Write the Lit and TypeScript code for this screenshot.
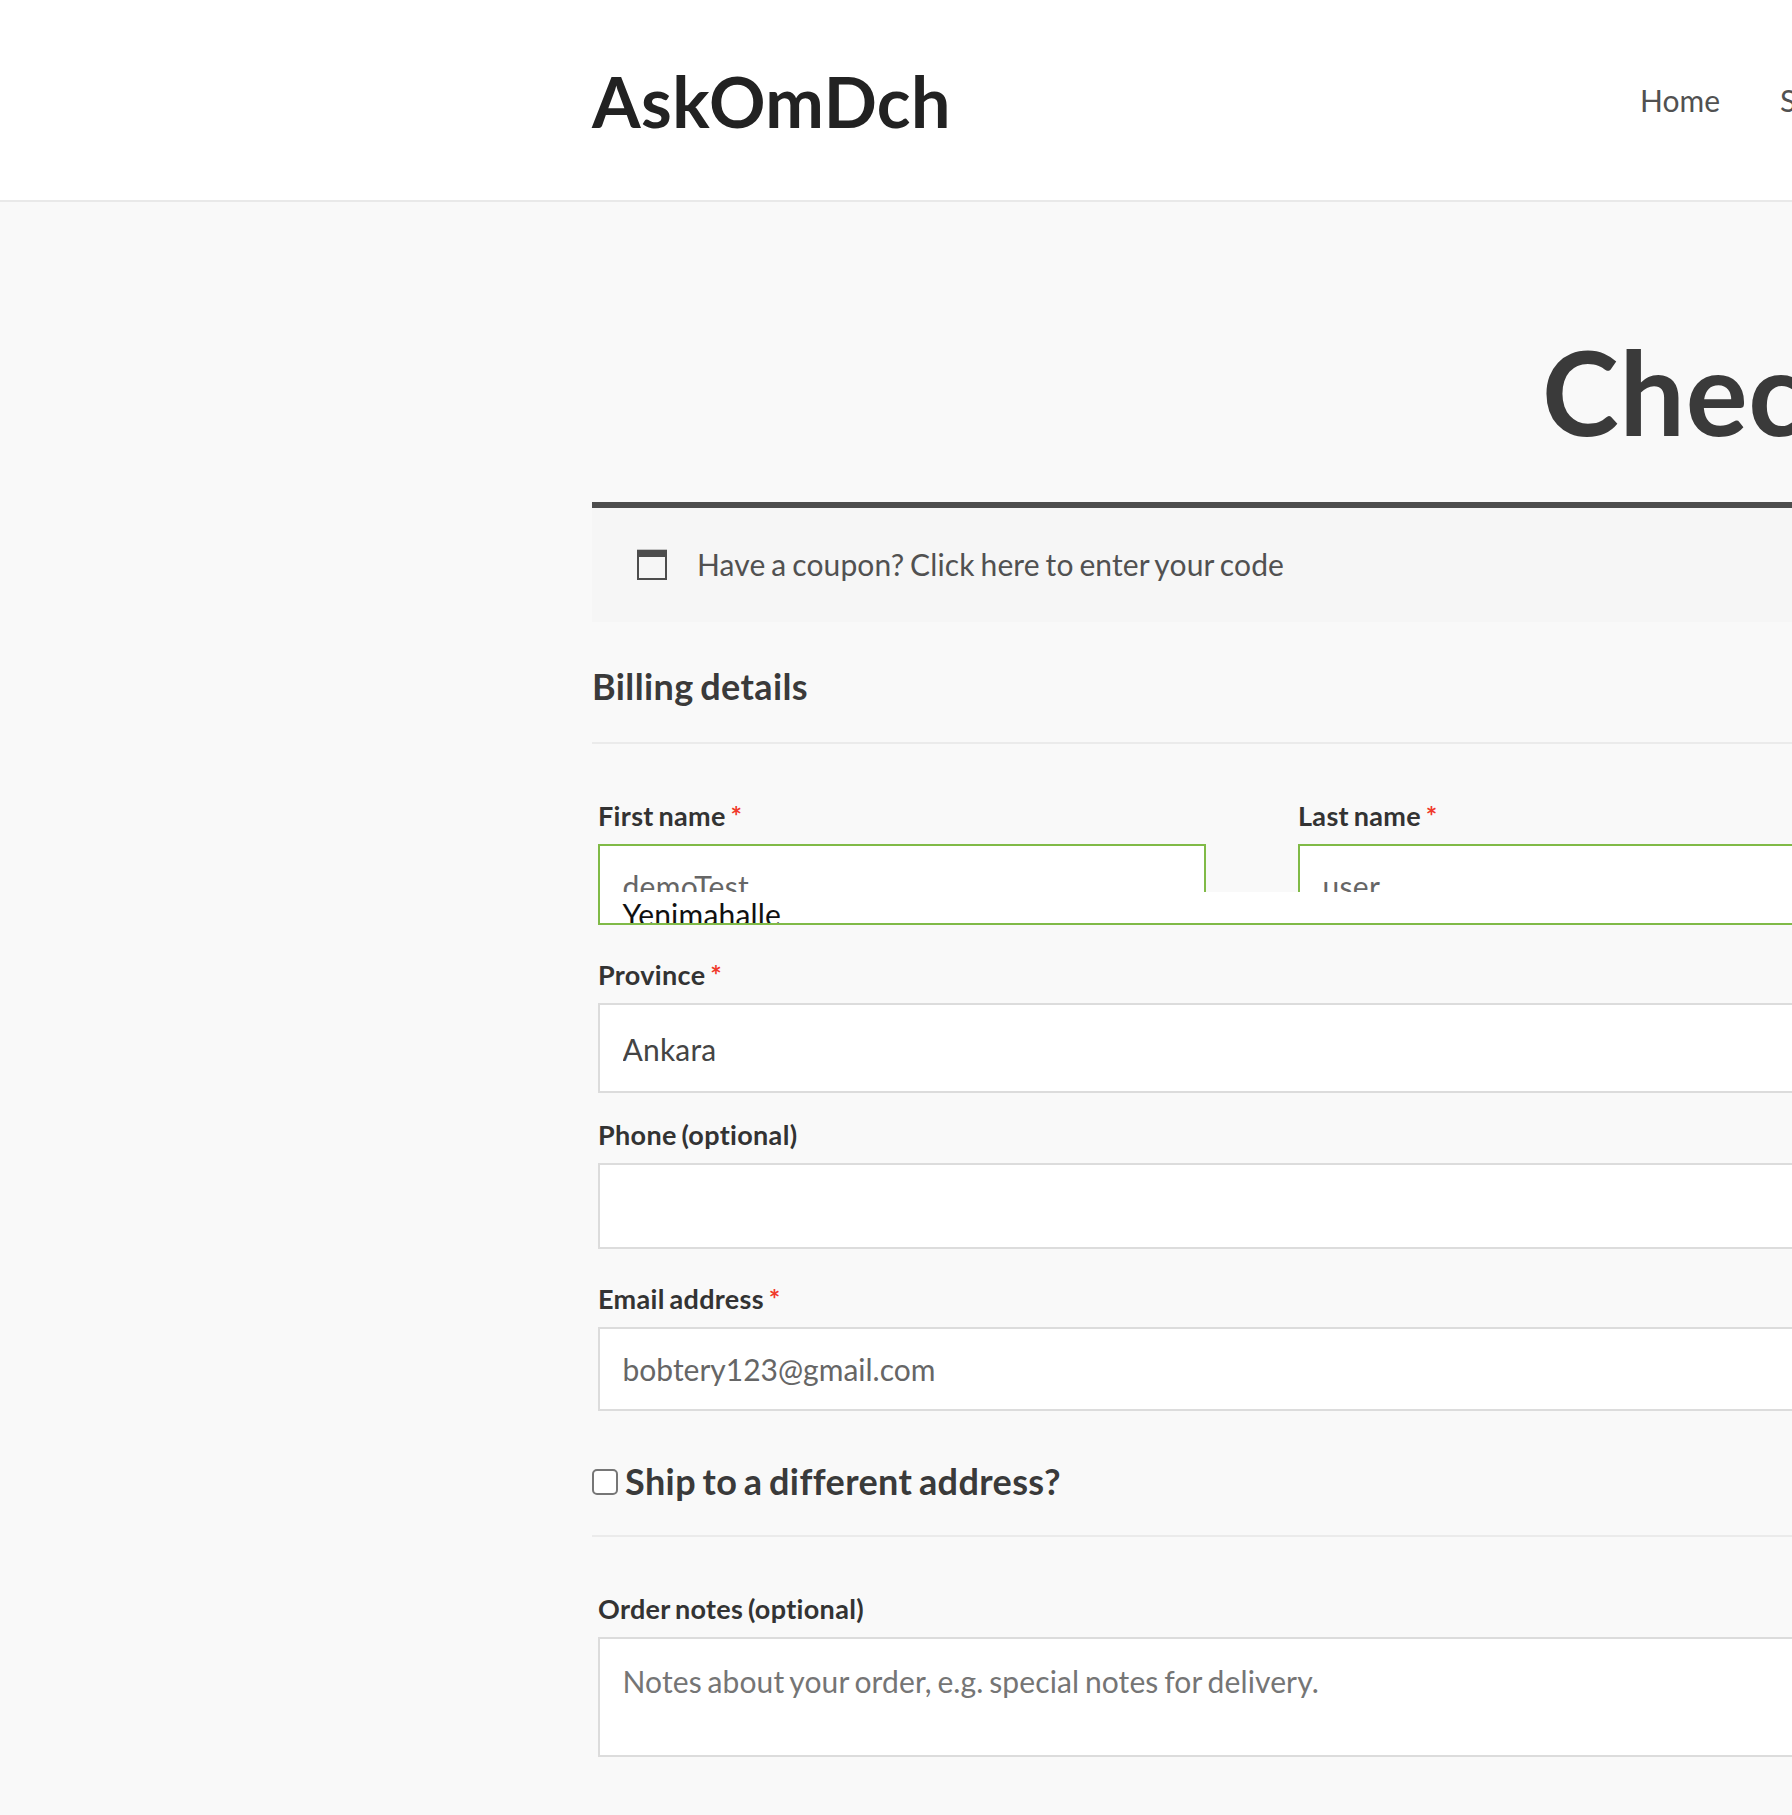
import { LitElement, html, css, nothing } from "lit";
import { customElement } from "lit/decorators.js";

@customElement("app-root")
export class AppRoot extends LitElement {
  static styles = css`
    :host {
      display: block;
      width: 100%;
      height: 1815px;
      overflow: hidden;
      background: #f9f9f9;
      color: #4b4b4b;
      font-family: Lato, sans-serif;
      font-size: 30px;
      line-height: 48px;
      font-variant-ligatures: none;
    }
    * {
      box-sizing: border-box;
    }
    .header {
      height: 202px;
      padding-left: 592px;
      background: #fff;
      border-bottom: 2px solid #e9e9e9;
      display: flex;
      align-items: center;
      white-space: nowrap;
      overflow: hidden;
    }
    .logo {
      width: 1048px;
      flex: none;
      padding-top: 1px;
      font-size: 70px;
      letter-spacing: 0.45px;
      line-height: 86px;
      font-weight: 700;
      color: #222;
    }
    .nav {
      display: flex;
      gap: 60px;
      padding-bottom: 1px;
      color: #515151;
    }
    .content {
      width: 2992px;
      padding: 132px 0 0 592px;
    }
    .title {
      margin: 0;
      height: 168px;
      font-size: 116px;
      line-height: 116px;
      letter-spacing: 0.7px;
      text-align: center;
      font-weight: 700;
      color: #3a3a3a;
    }
    .coupon {
      height: 120px;
      padding: 32px 0 0 44px;
      background: #f6f6f6;
      border-top: 6px solid #4d4d4d;
      color: #515151;
      display: flex;
      gap: 29px;
      letter-spacing: 0.14px;
      word-spacing: -2px;
    }
    .coupon-icon {
      width: 32px;
      height: 32px;
      margin-top: 9px;
    }
    .heading {
      margin: 0;
      font-size: 36px;
      line-height: 48px;
      font-weight: 700;
      letter-spacing: 0.4px;
      word-spacing: -2.6px;
      color: #3a3a3a;
      border-bottom: 2px solid #ebebeb;
    }
    .billing {
      height: 122px;
      padding-top: 40px;
    }
    .shipping {
      height: 126px;
      padding-top: 46px;
      display: flex;
      gap: 7px;
    }
    .check {
      appearance: none;
      width: 26px;
      height: 26px;
      margin: 12px 0 0;
      border: 2px solid #767676;
      border-radius: 5px;
      background: #fff;
    }
    .fields {
      width: 1308px;
      margin-left: 6px;
    }
    .names {
      display: grid;
      grid-template-columns: 608px 608px;
      gap: 92px;
      height: 148px;
      padding-top: 52px;
      overflow: hidden;
    }
    .label {
      display: block;
      height: 48px;
      font-size: 27px;
      line-height: 40px;
      font-weight: 700;
      letter-spacing: 0.33px;
      word-spacing: -2.2px;
      color: #333;
    }
    .required {
      color: #f0392b;
    }
    .control {
      display: block;
      width: 100%;
      margin: 0;
      padding: 0 22.5px;
      border: 2px solid #dcdcdc;
      border-radius: 0;
      outline: none;
      resize: none;
      background: #fff;
      color: #666;
      font: 400 30px/48px Lato, sans-serif;
      font-variant-ligatures: none;
    }
    .control::placeholder {
      color: #757575;
      opacity: 1;
    }
    .valid {
      height: 84px;
      border-color: #80ba47;
      letter-spacing: 0.28px;
    }
    .city {
      height: 33px;
      padding: 0 22.5px;
      overflow: hidden;
      background: #fff;
      border: solid #80ba47;
      border-width: 0 0 2px 2px;
      color: #111;
      line-height: 44px;
      letter-spacing: 0.2px;
    }
    .province {
      height: 90px;
      padding-top: 1px;
      color: #444;
      letter-spacing: 0.2px;
    }
    .phone {
      height: 86px;
    }
    .email {
      height: 84px;
    }
    .notes {
      height: 120px;
      padding-top: 18px;
      letter-spacing: 0.12px;
      word-spacing: -2.1px;
    }
    .row-province {
      padding-top: 30px;
    }
    .row-phone {
      padding-top: 22px;
    }
    .row-email {
      padding-top: 30px;
    }
    .row-notes {
      padding-top: 52px;
    }
  `;

  private label(text: string, id: string, required = false) {
    return html`<label class="label" for=${id}
      >${text}${required ? html` <span class="required">*</span>` : nothing}</label
    >`;
  }

  render() {
    return html`
      <header class="header">
        <div class="logo">AskOmDch</div>
        <nav class="nav"><span>Home</span><span>Store</span></nav>
      </header>
      <main class="content">
        <h1 class="title">Checkout</h1>
        <div class="coupon">
          <svg class="coupon-icon" viewBox="0 0 32 32" fill="none">
            <path d="M2 2h28v28H2z" stroke="#4d4d4d" stroke-width="2" />
            <path d="M1 .7h30v7.3H1z" fill="#4d4d4d" />
          </svg>
          <span>Have a coupon? Click here to enter your code</span>
        </div>
        <h3 class="heading billing">Billing details</h3>
        <section class="fields">
          <div class="names">
            <div>
              ${this.label("First name", "first", true)}
              <input class="control valid" id="first" value="demoTest" />
            </div>
            <div>
              ${this.label("Last name", "last", true)}
              <input class="control valid" id="last" value="user" />
            </div>
          </div>
          <div class="city">Yenimahalle</div>
          <div class="row-province">
            ${this.label("Province", "province", true)}
            <input class="control province" id="province" value="Ankara" />
          </div>
          <div class="row-phone">
            ${this.label("Phone (optional)", "phone")}
            <input class="control phone" id="phone" />
          </div>
          <div class="row-email">
            ${this.label("Email address", "email", true)}
            <input class="control email" id="email" value="bobtery123@gmail.com" />
          </div>
        </section>
        <h3 class="heading shipping">
          <input class="check" type="checkbox" id="ship" />
          <label for="ship">Ship to a different address?</label>
        </h3>
        <section class="fields row-notes">
          ${this.label("Order notes (optional)", "notes")}
          <textarea
            class="control notes"
            id="notes"
            placeholder="Notes about your order, e.g. special notes for delivery."
          ></textarea>
        </section>
      </main>
    `;
  }
}
